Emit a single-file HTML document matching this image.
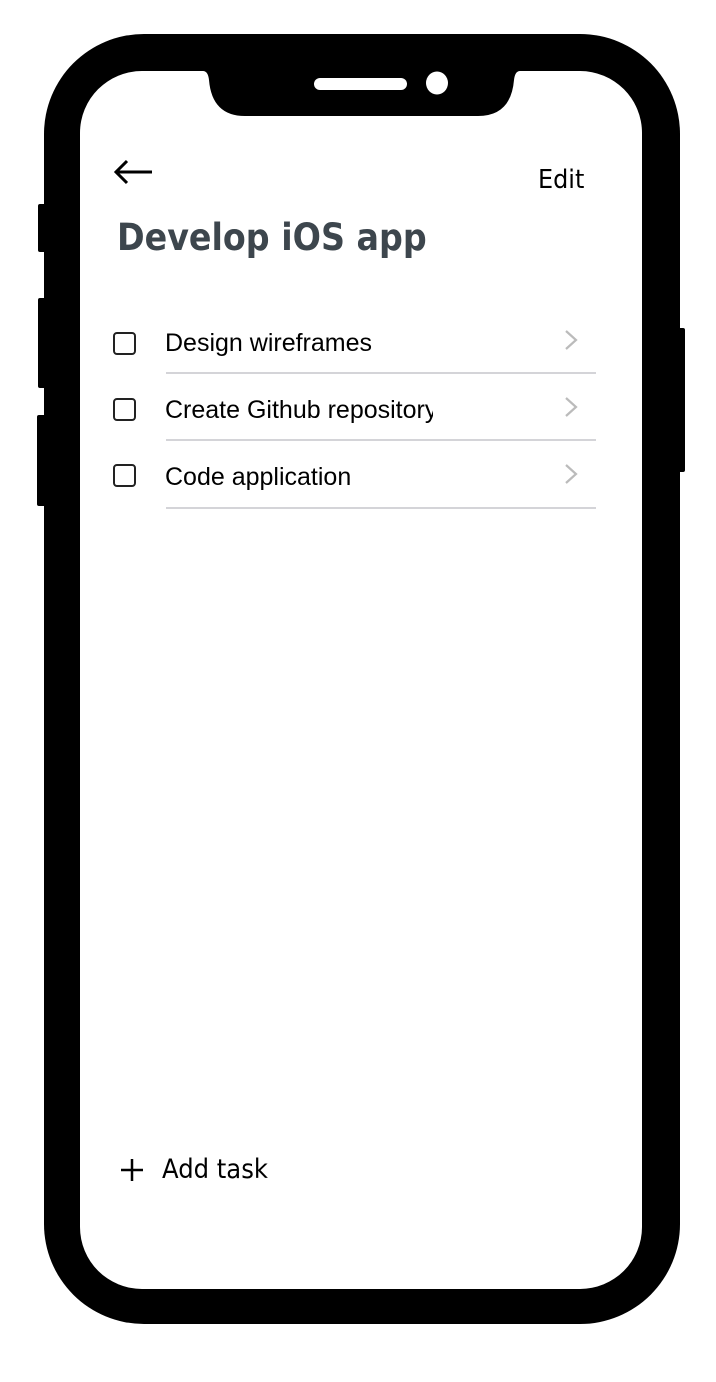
<!DOCTYPE html>
<html><head><style>
html,body{margin:0;padding:0;background:#fff;width:716px;height:1382px;overflow:hidden;position:relative;font-family:"Liberation Sans",sans-serif}
.a{position:absolute;white-space:nowrap}
.cb{position:absolute;left:113px;width:19px;height:19px;border:2px solid #222;border-radius:4px}
.t{position:absolute;left:165px;font-size:25px;color:#000}
.ln{position:absolute;left:166px;width:430px;height:2px;background:#d4d4d8}
</style></head><body>
<svg width="716" height="1382" style="position:absolute;left:0;top:0">
<rect x="38" y="204" width="8" height="48" rx="2" fill="#000"/>
<rect x="38" y="298" width="8" height="90" rx="2" fill="#000"/>
<rect x="37" y="415" width="9" height="91" rx="2" fill="#000"/>
<rect x="676" y="328" width="9" height="144" rx="2" fill="#000"/>
<rect x="44" y="34" width="636" height="1290" rx="100" fill="#000"/>
<rect x="80" y="71" width="562" height="1218" rx="62" fill="#fff"/>
<path d="M200 71 L203 71 Q208 71 209 80 Q212 116 245 116 L478 116 Q511 116 514 80 Q515 71 520 71 L523 71 Z" fill="#000"/>
<rect x="314" y="78" width="93" height="12" rx="6" fill="#fff"/>
<ellipse cx="437" cy="83" rx="11" ry="11.5" fill="#fff"/>
<path d="M117 172 L152 172 M127 161 L116 172 L127 183" stroke="#000" stroke-width="3" fill="none"/>
<path d="M566 331 L576 340 L566 349 M566 398 L576 407 L566 416 M566 465 L576 474 L566 483" stroke="#bbb" stroke-width="2.2" fill="none"/>
<path d="M132 1159 V1181 M121 1170 H143" stroke="#000" stroke-width="2.5"/>
</svg>
<div class="a" style="left:538px;top:165px;font-size:26px;font-family:'DejaVu Sans',sans-serif;transform:scaleX(0.92);transform-origin:left">Edit</div>
<div class="a" style="left:117px;top:216px;font-size:37px;font-weight:bold;color:#3d464d;font-family:'DejaVu Sans',sans-serif;transform:scaleX(0.9);transform-origin:left">Develop iOS app</div>
<div class="cb" style="top:332px"></div>
<div class="a t" style="top:329px">Design wireframes</div>
<div class="ln" style="top:372px"></div>
<div class="cb" style="top:398px"></div>
<div class="a t" style="top:396px;width:268px;overflow:hidden">Create Github repository</div>
<div class="ln" style="top:439px"></div>
<div class="cb" style="top:464px"></div>
<div class="a t" style="top:463px">Code application</div>
<div class="ln" style="top:507px"></div>
<div class="a" style="left:162px;top:1154px;font-size:27px;font-family:'DejaVu Sans',sans-serif;transform:scaleX(0.9);transform-origin:left">Add task</div>
</body></html>
